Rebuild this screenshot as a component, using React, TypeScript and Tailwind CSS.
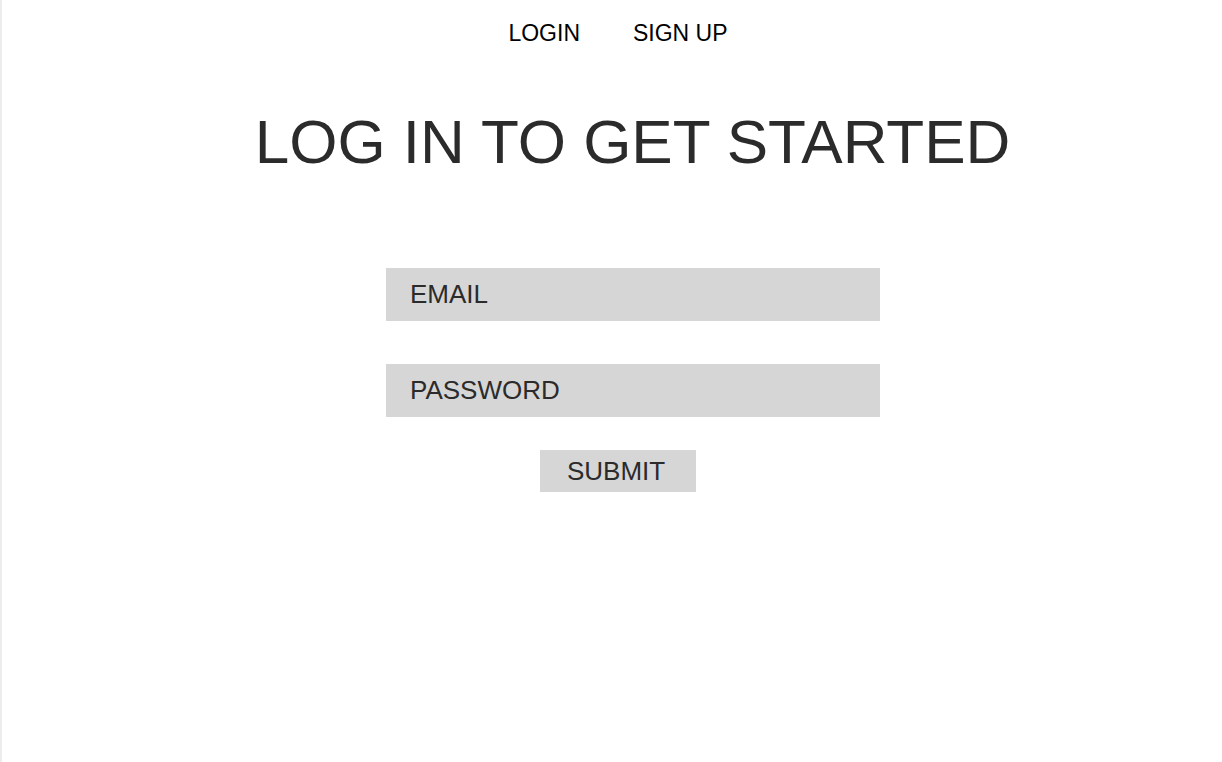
export default function App() {
  return (
    <div className="min-h-[762px] w-full bg-white border-l-2 border-[#ececec] font-['Liberation_Sans',Arial,sans-serif]">
      <nav className="flex justify-center gap-[53px] pt-[19px] pl-[12px] text-[23px] leading-[28px] text-black">
        <span>LOGIN</span>
        <span>SIGN UP</span>
      </nav>
      <h1 className="mt-[59px] pl-[41px] text-center text-[62px] leading-[72px] text-[#2b2b2b]">
        LOG IN TO GET STARTED
      </h1>
      <form className="mt-[90px] flex flex-col items-center pl-[42px]">
        <div className="flex h-[53px] w-[494px] items-center bg-[#d6d6d6] pl-[24px] text-[26px] text-[#2b2b2b]">
          EMAIL
        </div>
        <div className="mt-[43px] flex h-[53px] w-[494px] items-center bg-[#d6d6d6] pl-[24px] text-[26px] text-[#2b2b2b]">
          PASSWORD
        </div>
        <div className="mt-[33px] mr-[30px] flex h-[42px] w-[156px] items-center bg-[#d6d6d6] pl-[27px] text-[26px] text-[#2b2b2b]">
          SUBMIT
        </div>
      </form>
    </div>
  );
}
